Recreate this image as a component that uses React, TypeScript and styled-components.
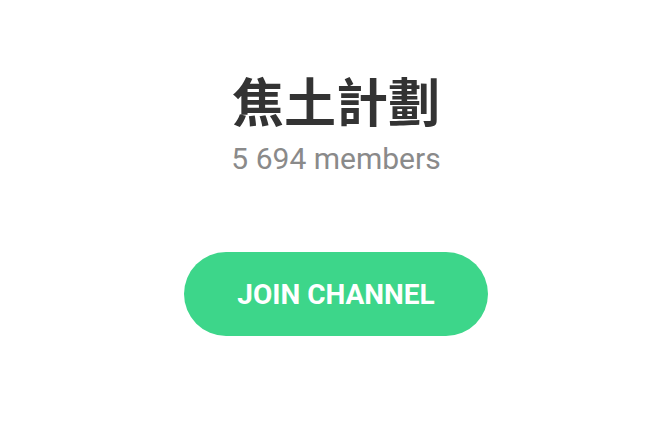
import React from "react";
import styled, { createGlobalStyle } from "styled-components";

const GlobalStyle = createGlobalStyle`
  html, body { margin: 0; padding: 0; background: #ffffff; }
  body { font-family: Roboto, "Noto Sans", sans-serif; }
`;

const Page = styled.main`
  width: 666px;
  height: 422px;
  box-sizing: border-box;
  display: flex;
  flex-direction: column;
  align-items: center;
  padding: 68px 0 0 6px;
`;

const Title = styled.h1`
  margin: 0;
  font-family: "Noto Sans CJK TC", "Noto Sans CJK SC", sans-serif;
  font-weight: 700;
  font-size: 52px;
  line-height: 64px;
  color: #333333;
`;

const Members = styled.div`
  margin-top: 9px;
  font-family: Roboto, sans-serif;
  font-size: 30px;
  line-height: 36px;
  color: #8a8a8a;
`;

const JoinButton = styled.button`
  margin-top: 75px;
  width: 304px;
  height: 84px;
  border: none;
  border-radius: 42px;
  background: #3dd68a;
  color: #ffffff;
  font-family: Roboto, sans-serif;
  font-weight: 700;
  font-size: 28px;
  text-transform: uppercase;
  cursor: pointer;
`;

export default function App() {
  return (
    <>
      <GlobalStyle />
      <Page>
        <Title>焦土計劃</Title>
        <Members>5 694 members</Members>
        <JoinButton>Join Channel</JoinButton>
      </Page>
    </>
  );
}
